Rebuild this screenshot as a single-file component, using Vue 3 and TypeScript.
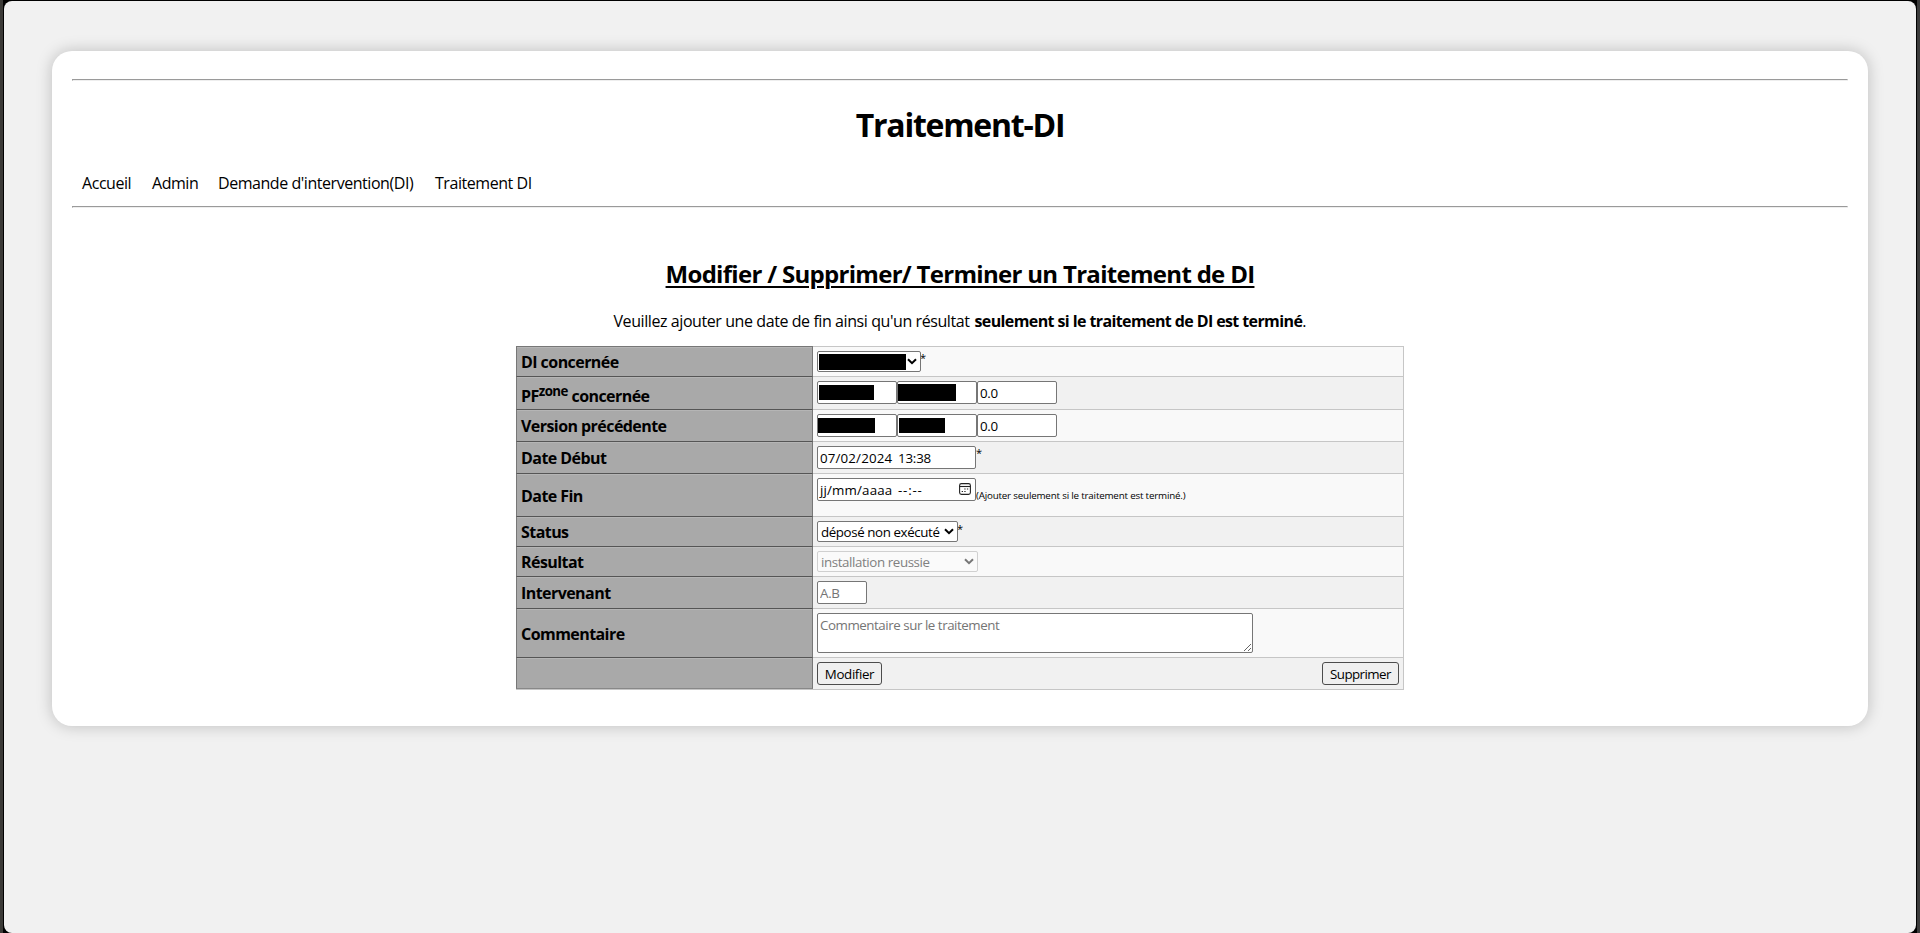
<script setup lang="ts">
const nav = [
  { label: 'Accueil', cls: 'n1' },
  { label: 'Admin', cls: 'n2' },
  { label: "Demande d'intervention(DI)", cls: 'n3' },
  { label: 'Traitement DI', cls: 'n4' },
]
</script>

<template>
  <div class="screen">
    <div class="window">
      <main class="card">
        <hr />
        <h1>Traitement-DI</h1>
        <nav>
          <a v-for="item in nav" :key="item.label" :class="item.cls">{{ item.label }}</a>
        </nav>
        <hr />
        <h2><span>Modifier / Supprimer/ Terminer un Traitement de DI</span></h2>
        <p class="intro">
          <span class="lead">Veuillez ajouter une date de fin ainsi qu'un résultat</span><b>seulement si le traitement de DI est terminé</b><span>.</span>
        </p>
        <form class="table" @submit.prevent>
          <div class="row h30">
            <div class="head"><span>DI concernée</span></div>
            <div class="cell">
              <div class="box select w104"><i class="mask m1"></i><svg class="chev" viewBox="0 0 10 7"><path d="M1 1.2 5 5.2 9 1.2" /></svg></div>
              <span class="star s1">*</span>
            </div>
          </div>
          <div class="row alt h33">
            <div class="head"><span>PF<sup>zone</sup> concernée</span></div>
            <div class="cell">
              <div class="box w80"><i class="mask m2"></i></div>
              <div class="box w80"><i class="mask m3"></i></div>
              <input class="box w80" value="0.0" />
            </div>
          </div>
          <div class="row h32">
            <div class="head"><span>Version précédente</span></div>
            <div class="cell">
              <div class="box w80"><i class="mask m4"></i></div>
              <div class="box w80"><i class="mask m5"></i></div>
              <input class="box w80" value="0.0" />
            </div>
          </div>
          <div class="row alt h32">
            <div class="head"><span>Date Début</span></div>
            <div class="cell">
              <div class="box date"><span class="d1">07/02/2024</span><span class="d2">13:38</span></div>
              <span class="star s2">*</span>
            </div>
          </div>
          <div class="row h43">
            <div class="head"><span>Date Fin</span></div>
            <div class="cell">
              <div class="box date">
                <span class="d3">jj/mm/aaaa</span><span class="d4">--:--</span>
                <svg class="cal" viewBox="0 0 12 12">
                  <rect x=".6" y=".6" width="10.8" height="10.8" rx="1.8" />
                  <path d="M.6 3.5H11.4" />
                  <path class="dots" d="M5.3 6h1.3M7.9 6h1.3M2.7 8.5H4M5.3 8.5h1.3" />
                </svg>
              </div>
              <span class="hint">(Ajouter seulement si le traitement est terminé.)</span>
            </div>
          </div>
          <div class="row alt h30">
            <div class="head"><span>Status</span></div>
            <div class="cell">
              <div class="box select w141"><span>déposé non exécuté</span><svg class="chev" viewBox="0 0 10 7"><path d="M1 1.2 5 5.2 9 1.2" /></svg></div>
              <span class="star s3">*</span>
            </div>
          </div>
          <div class="row h30">
            <div class="head"><span>Résultat</span></div>
            <div class="cell">
              <div class="box select off w161"><span>installation reussie</span><svg class="chev" viewBox="0 0 10 7"><path d="M1 1.2 5 5.2 9 1.2" /></svg></div>
            </div>
          </div>
          <div class="row alt h32">
            <div class="head"><span>Intervenant</span></div>
            <div class="cell"><input class="box w50" placeholder="A.B" /></div>
          </div>
          <div class="row h49">
            <div class="head"><span>Commentaire</span></div>
            <div class="cell"><textarea class="box" placeholder="Commentaire sur le traitement"></textarea></div>
          </div>
          <div class="row alt h32 last">
            <div class="head"></div>
            <div class="cell">
              <button class="b1">Modifier</button>
              <button class="b2">Supprimer</button>
            </div>
          </div>
        </form>
      </main>
    </div>
  </div>
</template>

<style>
body { margin: 0; overflow: hidden; background: #3b3a38; }
</style>

<style scoped>
* { box-sizing: border-box; }
.screen {
  height: 933px;
  padding: 1px 4px 0;
  background: linear-gradient(90deg, #3b3a37 3px, #000 3px, #000 1917px, #3b3b3b 1917px);
  font: 16px/21px "Open Sans", "Noto Sans", sans-serif;
  color: #000;
}
.window { height: 932px; padding: 50px 48px; background: #f1f1f1; border-radius: 8px; }
.card {
  height: 675px;
  padding: 28px 20px 0;
  background: #fff;
  border-radius: 20px;
  box-shadow: 0 0 16px rgba(0, 0, 0, .22);
}
hr { height: 2px; margin: 0; border: 1px solid; border-color: #9a9a9a #eee #eee #9a9a9a; }
h1, h2, p { margin: 0; text-align: center; white-space: nowrap; }
h1 { margin-top: 22px; font-size: 32px; line-height: 43px; height: 43px; letter-spacing: -1.25px; }
nav { display: flex; height: 21px; margin: 27px 0 12px 10px; gap: 20px; letter-spacing: -.45px; }
nav a { white-space: nowrap; }
.n1 { width: 50px; }
.n2 { width: 46px; }
.n3 { width: 197px; }
h2 { margin-top: 50px; height: 32px; font-size: 24px; line-height: 32px; letter-spacing: -.7px; text-decoration: underline; text-decoration-thickness: 2px; text-underline-offset: 3px; }
.intro { display: flex; justify-content: center; margin-top: 21px; height: 21px; }
.lead { margin-right: 5px; letter-spacing: -.42px; }
.intro b { letter-spacing: -.6px; }
.table { width: 888px; margin: 14px auto 0; }
.row { display: flex; background: #f9f9f9; }
.alt { background: #f1f1f1; }
.h30 { height: 30px; } .h32 { height: 32px; } .h33 { height: 33px; } .h43 { height: 43px; } .h49 { height: 49px; }
.last { height: 33px; border-bottom: 1px solid #c6c6c6; }
.last .head { border-bottom: 1px solid #888; }
.head {
  display: flex; align-items: center; width: 297px; padding: 2px 4px 0;
  background: #a9a9a9; border: 1px solid #777; border-top-color: #555; border-bottom: 0;
  box-shadow: inset 0 1px #b5b5b5; font-weight: 700; letter-spacing: -.56px; white-space: nowrap;
}
.row:first-child .head { border-top-color: #777; }
.cell { display: flex; flex: 1; padding: 4px; border-top: 1px solid #c6c6c6; border-right: 1px solid #c6c6c6; white-space: nowrap; }
.box {
  position: relative; display: block; height: 23px; margin: 0; padding: 2px; flex: none;
  border: 1px solid #767676; border-radius: 2px; background: #fff; outline: 0;
  font: 13.33px/18px "Open Sans", "Noto Sans", sans-serif; letter-spacing: -.3px; color: #000;
}
.select { height: 21px; display: flex; align-items: center; padding: 0 3px; letter-spacing: -.4px; }
.w50 { width: 50px; } .w80 { width: 80px; } .w104 { width: 104px; } .w141 { width: 141px; } .w161 { width: 161px; }
.off { color: #808080; border-color: #d0d0d0; background: #fafafa; }
.chev { position: absolute; right: 3px; top: 6px; width: 10px; height: 7px; fill: none; stroke: #000; stroke-width: 2; }
.off .chev { stroke: #777; }
.mask { position: absolute; background: #000; }
.m1 { left: 1px; top: 2px; width: 87px; height: 16px; }
.m2 { left: 1px; top: 3px; width: 55px; height: 15px; }
.m3 { left: 0; top: 2px; width: 58px; height: 17px; }
.m4 { left: 0; top: 3px; width: 57px; height: 15px; }
.m5 { left: 1px; top: 3px; width: 46px; height: 15px; }
.date { display: flex; width: 159px; letter-spacing: 0; }
.d1, .d3 { width: 78px; letter-spacing: .15px; }
.d2 { letter-spacing: -.2px; }
.d4 { letter-spacing: .8px; }
.cal { position: absolute; right: 4px; top: 4px; width: 12px; height: 12px; fill: none; stroke: #222; stroke-width: 1.1; }
.star { font-size: 11px; line-height: 11px; }
.s1 { margin: 1px 0 0 -1px; }
.s2 { margin: 1px 0 0; }
.s3 { margin: 2px 0 0 -1px; }
.hint { margin-top: 7px; font-size: 9.8px; line-height: 21px; letter-spacing: -.19px; }
textarea.box { width: 436px; height: 40px; padding: 2px; letter-spacing: -.45px; }
::placeholder { color: #757575; opacity: 1; }
button {
  height: 23px; padding: 0; border: 1px solid #4c4c4c; border-radius: 3px; background: #efefef;
  font: 13.33px/18px "Open Sans", "Noto Sans", sans-serif; letter-spacing: -.38px; color: #000;
}
.b1 { width: 65px; }
.b2 { width: 77px; margin-left: auto; letter-spacing: -.55px; }
</style>
